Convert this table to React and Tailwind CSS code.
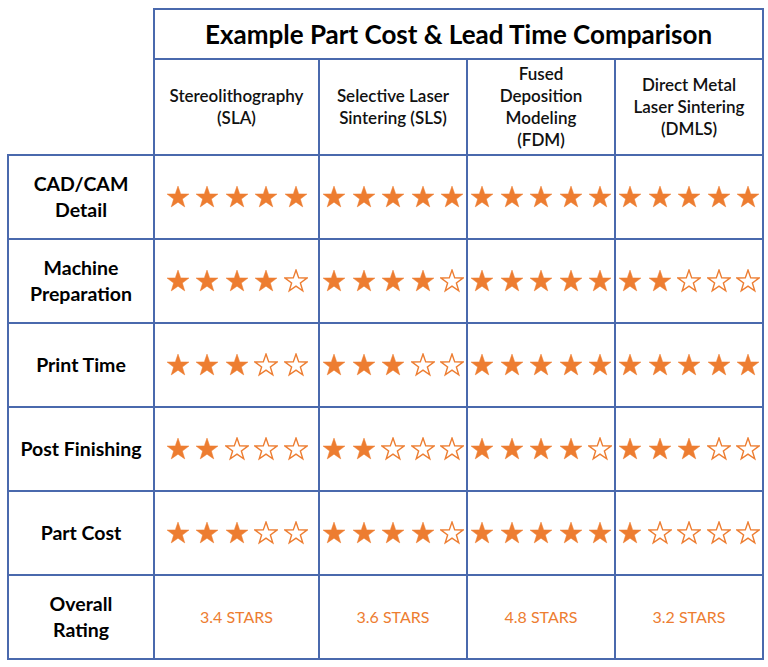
const methods = [
  ['Stereolithography', '(SLA)'],
  ['Selective Laser', 'Sintering (SLS)'],
  ['Fused', 'Deposition', 'Modeling', '(FDM)'],
  ['Direct Metal', 'Laser Sintering', '(DMLS)'],
]

const rows = [
  { label: ['CAD/CAM', 'Detail'], stars: [5, 5, 5, 5] },
  { label: ['Machine', 'Preparation'], stars: [4, 4, 5, 2] },
  { label: ['Print Time'], stars: [3, 3, 5, 5] },
  { label: ['Post Finishing'], stars: [2, 2, 4, 3] },
  { label: ['Part Cost'], stars: [3, 4, 5, 1] },
]

const overall = ['3.4 STARS', '3.6 STARS', '4.8 STARS', '3.2 STARS']

const STAR = 'M12 1.1 L14.7 8.88 L22.94 9.05 L16.38 14.02 L18.76 21.9 L12 17.2 L5.24 21.9 L7.62 14.02 L1.06 9.05 L9.3 8.88 Z'

function Star({ filled }) {
  return (
    <svg viewBox="0 0 24 24" className="w-[24px] h-[24px] shrink-0">
      <path
        d={STAR}
        fill={filled ? '#ed7d31' : '#ffffff'}
        stroke="#ed7d31"
        strokeWidth={filled ? 0.5 : 1.4}
        strokeLinejoin="miter"
      />
    </svg>
  )
}

function Stars({ count }) {
  return (
    <div className="flex items-center justify-center gap-[5.5px]">
      {[0, 1, 2, 3, 4].map(i => <Star key={i} filled={i < count} />)}
    </div>
  )
}

const line = 'border-[#4a69ad]'

export default function App() {
  return (
    <div className="w-[768px] h-[667px] bg-white pt-2 pl-[7px] text-black" style={{ fontFamily: 'Lato, "Open Sans", sans-serif' }}>
      <div className="grid grid-cols-[148px_165px_148px_148px_148px] grid-rows-[52px_96px_repeat(6,84px)] w-[757px]">
        <div className={`row-span-2 border-r-2 border-b-2 ${line}`} />
        <div className={`col-span-4 border-t-2 border-r-2 border-b-2 ${line} flex items-center justify-center text-[26px] font-bold`}>
          Example Part Cost &amp; Lead Time Comparison
        </div>
        {methods.map((m, i) => (
          <div key={i} className={`border-r-2 border-b-2 ${line} flex flex-col items-center justify-center text-[17px] leading-[22px] font-semibold text-center text-[#111]`}>
            {m.map(t => <span key={t}>{t}</span>)}
          </div>
        ))}
        {rows.map(r => (
          <div key={r.label[0]} className="contents">
            <div className={`border-l-2 border-r-2 border-b-2 ${line} flex flex-col items-center justify-center text-[19.5px] leading-[26px] font-bold`}>
              {r.label.map(t => <span key={t}>{t}</span>)}
            </div>
            {r.stars.map((s, i) => (
              <div key={i} className={`border-r-2 border-b-2 ${line} flex items-center justify-center`}>
                <Stars count={s} />
              </div>
            ))}
          </div>
        ))}
        <div className={`border-l-2 border-r-2 border-b-2 ${line} flex flex-col items-center justify-center text-[19.5px] leading-[26px] font-bold`}>
          <span>Overall</span>
          <span>Rating</span>
        </div>
        {overall.map(o => (
          <div key={o} className={`border-r-2 border-b-2 ${line} flex items-center justify-center text-[16px] text-[#ed7d31]`}>
            {o}
          </div>
        ))}
      </div>
    </div>
  )
}
